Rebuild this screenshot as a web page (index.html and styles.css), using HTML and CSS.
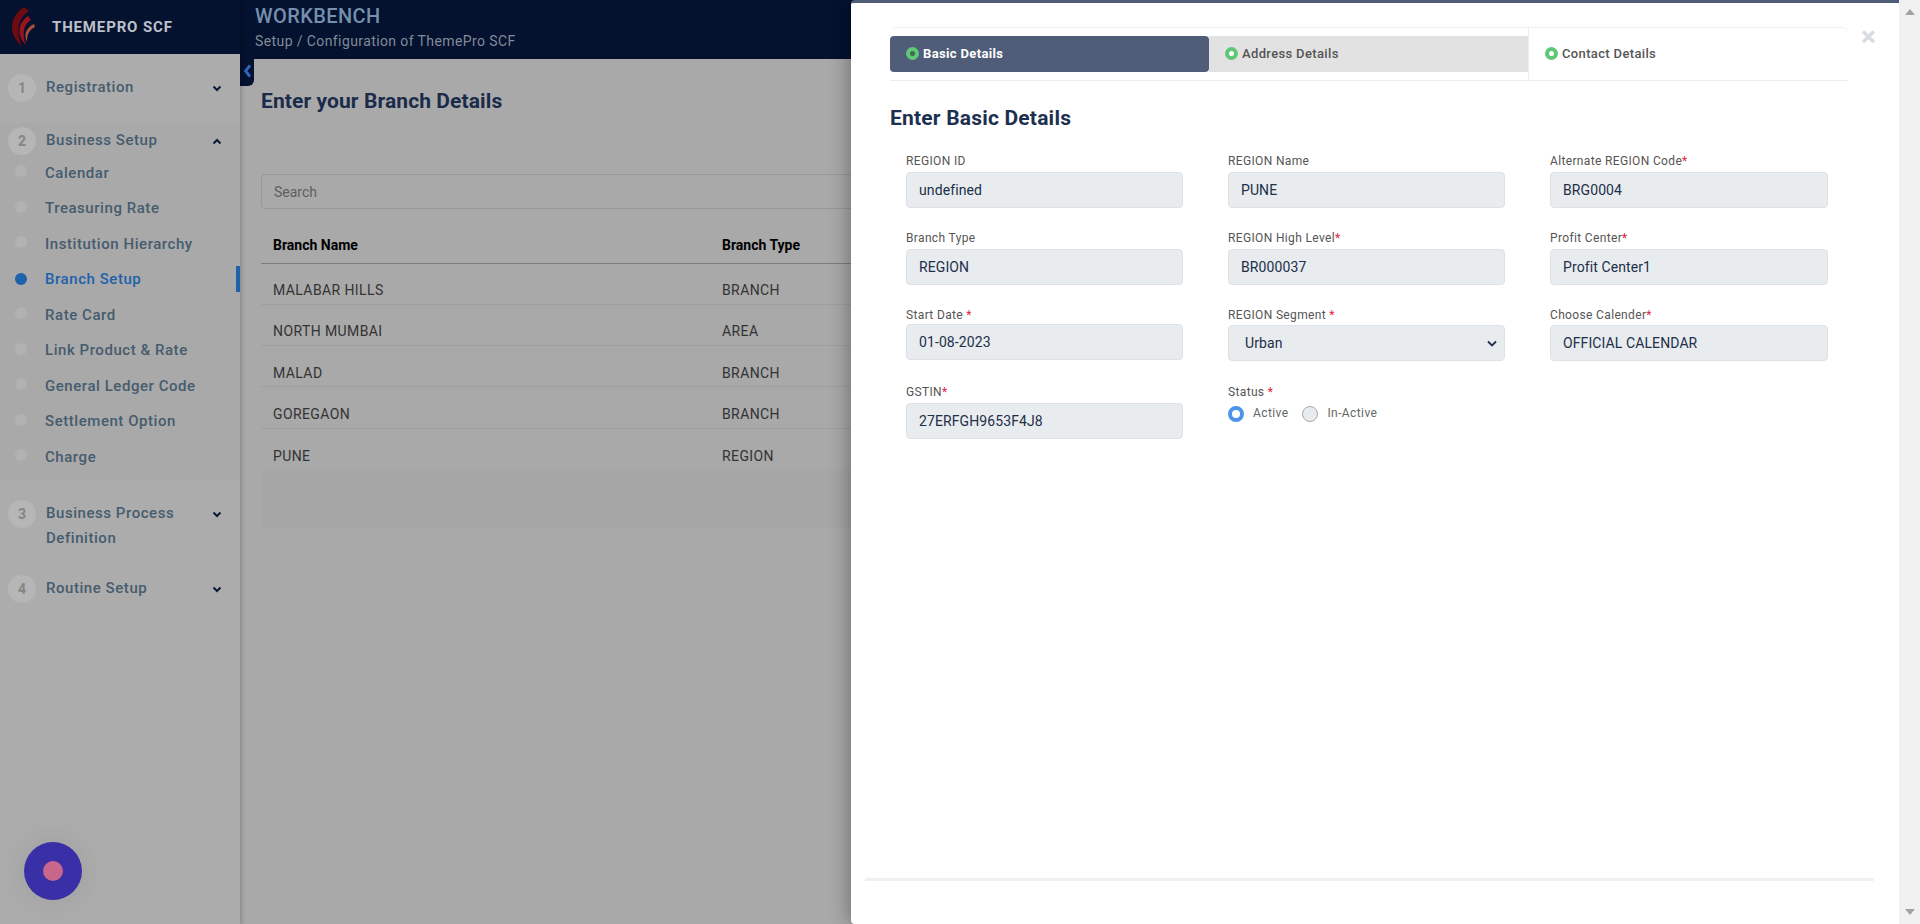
FILE: index.html
```html
<!DOCTYPE html>
<html>
<head>
  <meta charset="UTF-8">
  <title>Branch Setup</title>
  <link rel="stylesheet" href="styles.css">
</head>
<body>

  <div class="app">
    <aside class="sidebar">
      <div class="brand">
        <svg class="logo" width="26" height="42" viewBox="0 0 26 42">
          <path d="M14 1C1 9 -4 27 12 40C6 26 7 13 19 5Z" fill="#6d0a12"/>
          <path d="M18 10C8 17 6 29 16 39C12 28 13 19 21 14Z" fill="#98141c"/>
          <path d="M24 18C17 21 13 28 17 36C17 28 19 24 25 21Z" fill="#a8503c"/>
        </svg>
        <span class="brand-name">THEMEPRO SCF</span>
      </div>

      <div class="nav-section first">
        <div class="nav-head">
          <span class="step">1</span>
          <span class="nav-title">Registration</span>
          <svg class="chev" width="10" height="7" viewBox="0 0 10 7"><path d="M1.5 1.5L5 5L8.5 1.5" fill="none" stroke="#0c1a3a" stroke-width="2"/></svg>
        </div>
      </div>

      <div class="nav-section open">
        <div class="nav-head">
          <span class="step">2</span>
          <span class="nav-title">Business Setup</span>
          <svg class="chev" width="10" height="7" viewBox="0 0 10 7"><path d="M1.5 5.5L5 2L8.5 5.5" fill="none" stroke="#0c1a3a" stroke-width="2"/></svg>
        </div>
        <ul class="nav-items">
          <li><i></i>Calendar</li>
          <li><i></i>Treasuring Rate</li>
          <li><i></i>Institution Hierarchy</li>
          <li class="active"><i></i>Branch Setup</li>
          <li><i></i>Rate Card</li>
          <li><i></i>Link Product &amp; Rate</li>
          <li><i></i>General Ledger Code</li>
          <li><i></i>Settlement Option</li>
          <li><i></i>Charge</li>
        </ul>
      </div>

      <div class="nav-section">
        <div class="nav-head">
          <span class="step">3</span>
          <span class="nav-title">Business Process Definition</span>
          <svg class="chev" width="10" height="7" viewBox="0 0 10 7"><path d="M1.5 1.5L5 5L8.5 1.5" fill="none" stroke="#0c1a3a" stroke-width="2"/></svg>
        </div>
      </div>

      <div class="nav-section">
        <div class="nav-head">
          <span class="step">4</span>
          <span class="nav-title">Routine Setup</span>
          <svg class="chev" width="10" height="7" viewBox="0 0 10 7"><path d="M1.5 1.5L5 5L8.5 1.5" fill="none" stroke="#0c1a3a" stroke-width="2"/></svg>
        </div>
      </div>
    </aside>

    <main class="main">
      <header class="topbar">
        <div class="topbar-title">WORKBENCH</div>
        <div class="topbar-sub">Setup / Configuration of ThemePro SCF</div>
      </header>

      <div class="toggle">
        <svg width="9" height="14" viewBox="0 0 9 14"><path d="M7 1.5L2.5 7L7 12.5" fill="none" stroke="#2f68b8" stroke-width="2.8"/></svg>
      </div>

      <div class="content">
        <h2 class="page-title">Enter your Branch Details</h2>
        <input class="search" type="text" placeholder="Search">
        <table class="branches">
          <thead>
            <tr><th>Branch Name</th><th>Branch Type</th></tr>
          </thead>
          <tbody>
            <tr><td>MALABAR HILLS</td><td>BRANCH</td></tr>
            <tr><td>NORTH MUMBAI</td><td>AREA</td></tr>
            <tr><td>MALAD</td><td>BRANCH</td></tr>
            <tr><td>GOREGAON</td><td>BRANCH</td></tr>
            <tr><td>PUNE</td><td>REGION</td></tr>
          </tbody>
        </table>
        <div class="table-foot"></div>
      </div>
    </main>
  </div>

  <div class="float-btn"><span></span></div>

  <div class="modal">
    <span class="close">&times;</span>

    <div class="tabs">
      <div class="tab current"><i></i>Basic Details</div>
      <div class="tab grey"><i></i>Address Details</div>
      <div class="tab"><i></i>Contact Details</div>
    </div>

    <h2 class="form-title">Enter Basic Details</h2>

    <form class="form-grid">
      <div class="field">
        <label>REGION ID</label>
        <input type="text" value="undefined" readonly>
      </div>
      <div class="field">
        <label>REGION Name</label>
        <input type="text" value="PUNE" readonly>
      </div>
      <div class="field">
        <label>Alternate REGION Code<b>*</b></label>
        <input type="text" value="BRG0004" readonly>
      </div>

      <div class="field">
        <label>Branch Type</label>
        <input type="text" value="REGION" readonly>
      </div>
      <div class="field">
        <label>REGION High Level<b>*</b></label>
        <input type="text" value="BR000037" readonly>
      </div>
      <div class="field">
        <label>Profit Center<b>*</b></label>
        <input type="text" value="Profit Center1" readonly>
      </div>

      <div class="field tighter">
        <label>Start Date <b>*</b></label>
        <input type="text" value="01-08-2023" readonly>
      </div>
      <div class="field tight">
        <label>REGION Segment <b>*</b></label>
        <div class="select-wrap">
          <select>
            <option>Urban</option>
          </select>
          <svg width="10" height="7" viewBox="0 0 10 7"><path d="M1 1.5L5 5.5L9 1.5" fill="none" stroke="#212f4a" stroke-width="1.8"/></svg>
        </div>
      </div>
      <div class="field tight">
        <label>Choose Calender<b>*</b></label>
        <input type="text" value="OFFICIAL CALENDAR" readonly>
      </div>

      <div class="field">
        <label>GSTIN<b>*</b></label>
        <input type="text" value="27ERFGH9653F4J8" readonly>
      </div>
      <div class="field">
        <label>Status <b>*</b></label>
        <div class="radios">
          <span class="radio on"></span><span class="radio-text">Active</span>
          <span class="radio"></span><span class="radio-text">In-Active</span>
        </div>
      </div>
    </form>

    <div class="modal-rule"></div>
  </div>

  <div class="scrollbar">
    <span class="arrow up"></span>
    <span class="arrow down"></span>
  </div>

</body>
</html>
```

FILE: styles.css
```css
* {
  box-sizing: border-box;
}

html, body {
  height: 100%;
}

body {
  margin: 0;
  overflow: hidden;
  font-family: Roboto, "Liberation Sans", sans-serif;
  background-color: #a9a9a9;
  color: #333;
}

.app {
  display: flex;
  height: 924px;
}

/* sidebar */
.sidebar {
  width: 240px;
  flex-shrink: 0;
  background-color: #acacac;
  box-shadow: 2px 0 4px rgba(0, 0, 0, 0.18);
  position: relative;
  z-index: 1;
}

.brand {
  height: 54px;
  background-color: #04112f;
  display: flex;
  align-items: center;
  padding-left: 10px;
}

.logo {
  flex-shrink: 0;
}

.brand-name {
  margin-left: 16px;
  color: #bcc0c8;
  font-size: 15px;
  font-weight: 700;
  letter-spacing: 0.85px;
}

.nav-section {
  padding: 0 8px 0 8px;
}

.nav-section.first {
  padding-top: 20px;
  height: 69px;
}

.nav-section.open {
  background-color: #a9a9a9;
  padding-top: 4px;
  height: 357px;
  margin-bottom: 20px;
}

.nav-section:last-child {
  margin-top: 24px;
}

.nav-head {
  display: flex;
  align-items: flex-start;
}

.step {
  width: 28px;
  height: 28px;
  border-radius: 50%;
  background-color: #b6b6b6;
  color: #858585;
  font-size: 14px;
  font-weight: 700;
  display: flex;
  align-items: center;
  justify-content: center;
  flex-shrink: 0;
}

.nav-title {
  margin-left: 10px;
  padding-top: 1px;
  width: 150px;
  color: #465c6e;
  font-size: 15px;
  font-weight: 500;
  line-height: 25px;
  letter-spacing: 0.55px;
}

.chev {
  margin: 11px 0 0 16px;
}

.nav-items {
  list-style: none;
  margin: 0;
  padding: 0;
}

.nav-items li {
  height: 35.5px;
  display: flex;
  align-items: center;
  color: #465c6e;
  font-size: 15px;
  font-weight: 500;
  letter-spacing: 0.55px;
  margin-right: -8px;
}

.nav-items i {
  width: 12px;
  height: 12px;
  border-radius: 50%;
  background-color: #b2b2b2;
  margin: -3px 18px 0 7px;
}

.nav-items .active {
  color: #1d62ab;
  border-right: 4px solid #1d62ab;
  height: 26px;
  margin-top: 4.75px;
  margin-bottom: 4.75px;
}

.nav-items .active i {
  background-color: #1d62ab;
  margin-top: 0;
}

/* main */
.main {
  flex: 1;
  position: relative;
  min-width: 0;
}

.topbar {
  height: 59px;
  background-color: #04112f;
  padding: 5px 15px 0;
}

.topbar-title {
  color: #7590ad;
  font-size: 20px;
  font-weight: 500;
  line-height: 23px;
  letter-spacing: 0.4px;
}

.topbar-sub {
  color: #828b99;
  font-size: 14px;
  line-height: 18px;
  margin-top: 4px;
  letter-spacing: 0.4px;
}

.toggle {
  position: absolute;
  left: 0;
  top: 59px;
  width: 14px;
  height: 27px;
  background-color: #04112f;
  border-radius: 0 0 6px 0;
  display: flex;
  align-items: center;
  justify-content: center;
  padding-bottom: 3px;
}

.toggle svg {
  display: block;
}

.content {
  padding: 0 0 0 21px;
}

.page-title {
  margin: 28px 0 0;
  color: #1a2c4a;
  font-size: 21px;
  font-weight: 700;
  line-height: 28px;
  letter-spacing: 0.1px;
}

.search {
  display: block;
  width: 100%;
  height: 35px;
  margin-top: 59px;
  padding: 0 12px;
  background-color: transparent;
  border: 1px solid #989898;
  border-radius: 4px;
  font-family: inherit;
  font-size: 14px;
}

.search::placeholder {
  color: #5e5e5e;
  opacity: 1;
}

.branches {
  width: 100%;
  margin-top: 18px;
  border-collapse: collapse;
  font-size: 14px;
}

.branches th {
  text-align: left;
  color: #000;
  font-weight: 700;
  height: 36px;
  padding: 0 12px;
  border-bottom: 1px solid #7d7d7d;
}

.branches th:first-child {
  width: 449px;
}

.branches td {
  height: 41.3px;
  padding: 13px 12px 0;
  letter-spacing: 0.4px;
  border-bottom: 1px solid #9f9f9f;
}

.branches tr:last-child td {
  border-bottom: none;
}

.table-foot {
  height: 59px;
  background-color: #a6a6a6;
}

/* floating button */
.float-btn {
  position: absolute;
  left: 24px;
  top: 842px;
  width: 58px;
  height: 58px;
  border-radius: 50%;
  background-color: #392fa6;
  box-shadow: 0 0 30px rgba(0, 0, 0, 0.08);
  display: flex;
  align-items: center;
  justify-content: center;
  z-index: 2;
}

.float-btn span {
  width: 20px;
  height: 20px;
  border-radius: 50%;
  background-color: #c8668b;
}

/* modal */
.modal {
  position: absolute;
  left: 851px;
  top: 0;
  width: 1048px;
  height: 924px;
  background-color: #fff;
  border-top: 3px solid #4f5d78;
  border-radius: 4px 0 0 4px;
  box-shadow: 0 0 22px rgba(0, 0, 0, 0.4);
  padding: 24px 39px 43px;
  z-index: 3;
  display: flex;
  flex-direction: column;
}

.close {
  position: absolute;
  left: 1010px;
  top: 19px;
  color: #d8dbdf;
  font-size: 28px;
  font-weight: 700;
  line-height: 30px;
}

.tabs {
  display: flex;
  width: 958px;
  height: 54px;
  padding-top: 8px;
  border: 1px solid #eeeeee;
  border-width: 1px 0 1px 0;
  border-radius: 6px 6px 0 0;
}

.tab {
  flex: 1;
  height: 36px;
  display: flex;
  align-items: center;
  padding: 0 0 1px 16px;
  color: #555;
  font-size: 13px;
  font-weight: 500;
  letter-spacing: 0.35px;
}

.tab i {
  width: 13px;
  height: 13px;
  margin-right: 4px;
  border-radius: 50%;
  border: 4.5px solid #5fc877;
  background-color: #fff;
}

.tab.current {
  background-color: #4f5d78;
  border-radius: 4px;
  color: #fff;
  font-weight: 700;
}

.tab.current i {
  background-color: #3f6a55;
}

.tab.grey {
  background-color: #e2e2e2;
}

.tab:last-child {
  height: 52px;
  margin-top: -8px;
  padding-bottom: 2px;
  border-left: 1px solid #eeeeee;
}

.form-title {
  margin: 23px 0 0;
  color: #1d3050;
  font-size: 21px;
  font-weight: 700;
  line-height: 28px;
  letter-spacing: 0.2px;
}

.form-grid {
  display: grid;
  grid-template-columns: 277px 277px 278px;
  column-gap: 45px;
  grid-auto-rows: 77px;
  padding: 21px 0 0 16px;
}

.field label {
  display: block;
  height: 16px;
  margin-bottom: 3px;
  color: #555;
  font-size: 12px;
  line-height: 16px;
  letter-spacing: 0.35px;
}

.field label b {
  color: #e0243c;
  font-weight: 400;
}

.field.tight label {
  margin-bottom: 2px;
}

.field.tighter label {
  margin-bottom: 1px;
}

.field input,
.field select {
  display: block;
  width: 100%;
  height: 36px;
  padding: 0 12px;
  background-color: #e9ecef;
  border: 1px solid #dee2e6;
  border-radius: 4px;
  color: #212f4a;
  font-family: inherit;
  font-size: 14px;
  letter-spacing: 0.1px;
}

.field select {
  appearance: none;
  padding-left: 16px;
}

.select-wrap {
  position: relative;
}

.select-wrap svg {
  position: absolute;
  right: 8px;
  top: 15px;
}

.radios {
  display: flex;
  align-items: center;
  margin-top: 4px;
  color: #666;
  font-size: 12px;
  letter-spacing: 0.4px;
}

.radio {
  width: 16px;
  height: 16px;
  border-radius: 50%;
  background-color: #e9ecef;
  border: 1px solid #aaa;
  margin-top: 2px;
}

.radio.on {
  background-color: #fff;
  border: 4px solid #4c94ea;
}

.radio-text {
  margin: 0 14px 0 9px;
}

.modal-rule {
  height: 3px;
  margin: auto -14px 0 -25px;
  background-color: #eef0f3;
}

/* page scrollbar */
.scrollbar {
  position: absolute;
  right: 0;
  top: 0;
  width: 21px;
  height: 924px;
  background-color: #f1f1f1;
  display: flex;
  flex-direction: column;
  justify-content: space-between;
  align-items: center;
  padding: 9px 0;
  z-index: 4;
}

.arrow {
  width: 0;
  height: 0;
  border-left: 5px solid transparent;
  border-right: 5px solid transparent;
}

.arrow.up {
  border-bottom: 6px solid #a3a3a3;
}

.arrow.down {
  border-top: 6px solid #a3a3a3;
}
```
